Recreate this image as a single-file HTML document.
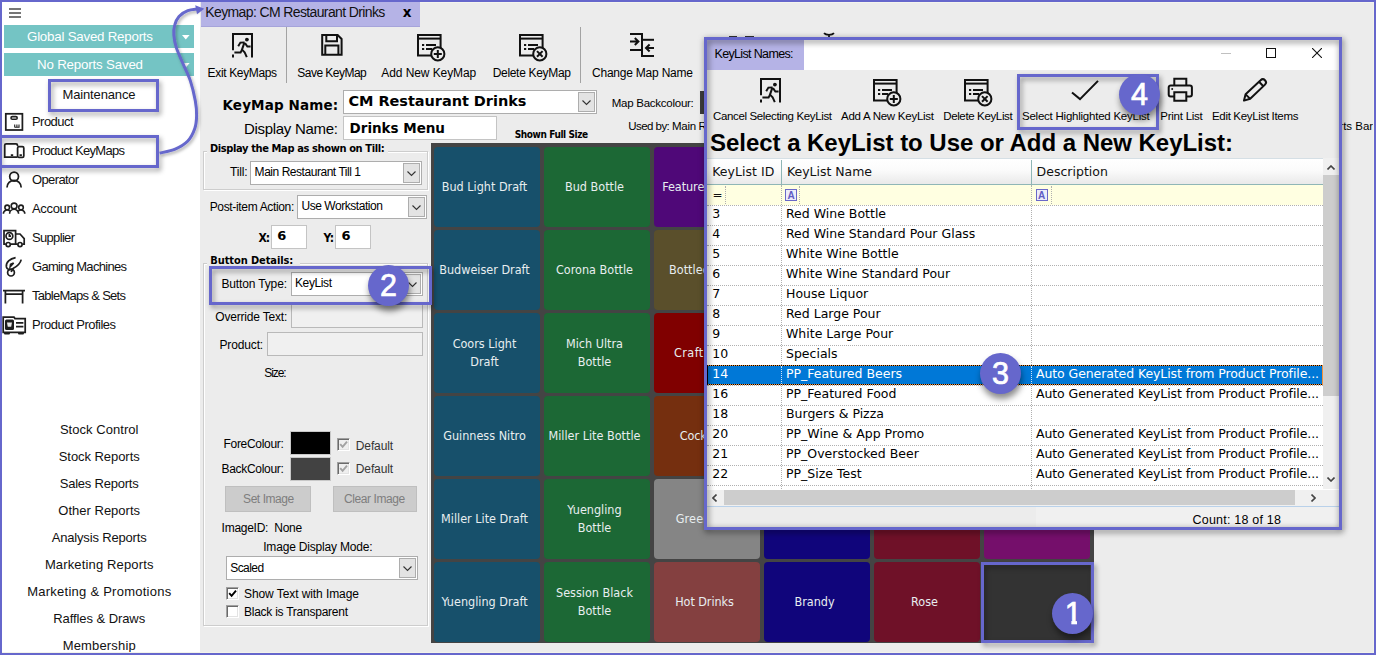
<!DOCTYPE html><html><head><meta charset="utf-8"><title>KeyMap</title><style>
html,body{margin:0;padding:0}html{overflow:hidden;width:1376px;height:655px}body{width:1376px;height:655px;position:relative;overflow:hidden;background:#ececec;font-family:"Liberation Sans",sans-serif}
.r{position:absolute;box-sizing:border-box}.t{position:absolute;white-space:pre;line-height:20px;height:20px}
#w{position:absolute;left:0;top:0;width:1376px;height:655px;overflow:hidden;background:#ececec}
</style></head><body><div id="w">
<div class="r" style="left:0px;top:0px;width:200px;height:655px;background:#fff;"></div>
<div class="r" style="left:9px;top:8px;width:12px;height:2px;background:#767676;"></div>
<div class="r" style="left:9px;top:12px;width:12px;height:2px;background:#767676;"></div>
<div class="r" style="left:9px;top:16px;width:12px;height:2px;background:#767676;"></div>
<div class="r" style="left:4px;top:25px;width:190px;height:23px;background:#74c4c4;"></div>
<div class="r" style="left:4px;top:53px;width:190px;height:23px;background:#74c4c4;"></div>
<svg class="r" style="left:182px;top:35px" width="8" height="5" viewBox="0 0 8 5"><path d="M0,0 L7.6,0 L3.8,4.5 Z" fill="#fff"/></svg>
<svg class="r" style="left:182px;top:63px" width="8" height="5" viewBox="0 0 8 5"><path d="M0,0 L7.6,0 L3.8,4.5 Z" fill="#fff"/></svg>
<div class="r" style="left:201px;top:2px;width:219px;height:25px;background:#b5b3e6;"></div>
<div class="r" style="left:201px;top:25.5px;width:219px;height:1.5px;background:#a6a4da;"></div>
<div class="r" style="left:286px;top:27px;width:1px;height:56px;background:#a3a3a3;"></div>
<div class="r" style="left:580px;top:27px;width:1px;height:56px;background:#a3a3a3;"></div>
<div class="r" style="left:343px;top:90px;width:254px;height:24px;background:#fff;border:1px solid #adadad;"></div>
<div class="r" style="left:578px;top:92px;width:17px;height:20px;background:#e3e3e3;border:1px solid #adadad;"></div>
<svg class="r" style="left:582.0px;top:99.5px" width="9" height="6" viewBox="0 0 9 6"><path d="M0.5,0.5 L4.5,4.5 L8.5,0.5" fill="none" stroke="#333" stroke-width="1.1"/></svg>
<div class="r" style="left:343px;top:116px;width:154px;height:24px;background:#fff;border:1px solid #c4c4c4;"></div>
<div class="r" style="left:700px;top:91px;width:40px;height:23px;background:#3c3c3c;"></div>
<div class="r" style="left:203px;top:151px;width:225px;height:39px;border:1px solid #cdcdcd;box-shadow:1px 1px 0 #fff, inset 1px 1px 0 #fff;"></div>
<div class="r" style="left:207px;top:145px;width:181px;height:12px;background:#ececec;"></div>
<div class="r" style="left:250px;top:161px;width:172px;height:24px;background:#fff;border:1px solid #adadad;"></div>
<div class="r" style="left:403px;top:163px;width:17px;height:20px;background:#e3e3e3;border:1px solid #adadad;"></div>
<svg class="r" style="left:407.0px;top:170.5px" width="9" height="6" viewBox="0 0 9 6"><path d="M0.5,0.5 L4.5,4.5 L8.5,0.5" fill="none" stroke="#333" stroke-width="1.1"/></svg>
<div class="r" style="left:297px;top:195px;width:130px;height:24px;background:#fff;border:1px solid #adadad;"></div>
<div class="r" style="left:408px;top:197px;width:17px;height:20px;background:#e3e3e3;border:1px solid #adadad;"></div>
<svg class="r" style="left:412.0px;top:204.5px" width="9" height="6" viewBox="0 0 9 6"><path d="M0.5,0.5 L4.5,4.5 L8.5,0.5" fill="none" stroke="#333" stroke-width="1.1"/></svg>
<div class="r" style="left:271px;top:225px;width:36px;height:24px;background:#fff;border:1px solid #c4c4c4;"></div>
<div class="r" style="left:335px;top:225px;width:36px;height:24px;background:#fff;border:1px solid #c4c4c4;"></div>
<div class="r" style="left:203px;top:263px;width:225px;height:363px;border:1px solid #cdcdcd;box-shadow:1px 1px 0 #fff, inset 1px 1px 0 #fff;"></div>
<div class="r" style="left:207px;top:256px;width:93px;height:12px;background:#ececec;"></div>
<div class="r" style="left:291px;top:272px;width:132px;height:24px;background:#fff;border:1px solid #adadad;"></div>
<div class="r" style="left:404px;top:274px;width:17px;height:20px;background:#e3e3e3;border:1px solid #adadad;"></div>
<svg class="r" style="left:408.0px;top:281.5px" width="9" height="6" viewBox="0 0 9 6"><path d="M0.5,0.5 L4.5,4.5 L8.5,0.5" fill="none" stroke="#333" stroke-width="1.1"/></svg>
<div class="r" style="left:291px;top:304px;width:132px;height:24px;background:#f0f0f0;border:1px solid #b9b9b9;"></div>
<div class="r" style="left:267px;top:332px;width:156px;height:24px;background:#f0f0f0;border:1px solid #b9b9b9;"></div>
<div class="r" style="left:290px;top:431px;width:41px;height:24px;background:#000;border:1px solid #c8c8c8;"></div>
<div class="r" style="left:290px;top:457px;width:41px;height:24px;background:#424242;border:1px solid #c8c8c8;"></div>
<div class="r" style="left:337px;top:438px;width:13px;height:13px;background:#efefef;border:1px solid;border-color:#a0a0a0 #fff #fff #a0a0a0;box-shadow:inset 1px 1px 0 #6a6a6a, inset -1px -1px 0 #e3e3e3;"></div>
<svg class="r" style="left:337px;top:438px" width="13" height="13" viewBox="0 0 13 13"><path d="M3.2,6.2 L5.6,8.8 L10,3.6" fill="none" stroke="#a2a2a2" stroke-width="1.9"/></svg>
<div class="r" style="left:337px;top:462px;width:13px;height:13px;background:#efefef;border:1px solid;border-color:#a0a0a0 #fff #fff #a0a0a0;box-shadow:inset 1px 1px 0 #6a6a6a, inset -1px -1px 0 #e3e3e3;"></div>
<svg class="r" style="left:337px;top:462px" width="13" height="13" viewBox="0 0 13 13"><path d="M3.2,6.2 L5.6,8.8 L10,3.6" fill="none" stroke="#a2a2a2" stroke-width="1.9"/></svg>
<div class="r" style="left:225px;top:486px;width:86px;height:26px;background:#cccccc;border:1px solid #bfbfbf;"></div>
<div class="r" style="left:333px;top:486px;width:84px;height:26px;background:#cccccc;border:1px solid #bfbfbf;"></div>
<div class="r" style="left:226px;top:556px;width:192px;height:24px;background:#fff;border:1px solid #adadad;"></div>
<div class="r" style="left:399px;top:558px;width:17px;height:20px;background:#e3e3e3;border:1px solid #adadad;"></div>
<svg class="r" style="left:403.0px;top:565.5px" width="9" height="6" viewBox="0 0 9 6"><path d="M0.5,0.5 L4.5,4.5 L8.5,0.5" fill="none" stroke="#333" stroke-width="1.1"/></svg>
<div class="r" style="left:226px;top:587px;width:13px;height:13px;background:#fff;border:1px solid;border-color:#a0a0a0 #fff #fff #a0a0a0;box-shadow:inset 1px 1px 0 #6a6a6a, inset -1px -1px 0 #e3e3e3;"></div>
<svg class="r" style="left:226px;top:587px" width="13" height="13" viewBox="0 0 13 13"><path d="M3.2,6.2 L5.6,8.8 L10,3.6" fill="none" stroke="#000" stroke-width="1.9"/></svg>
<div class="r" style="left:226px;top:605px;width:13px;height:13px;background:#fff;border:1px solid;border-color:#a0a0a0 #fff #fff #a0a0a0;box-shadow:inset 1px 1px 0 #6a6a6a, inset -1px -1px 0 #e3e3e3;"></div>
<div class="r" style="left:431px;top:143px;width:663px;height:500px;background:#444444;"></div>
<div class="r" style="left:433.7px;top:147.3px;width:106.3px;height:79.3px;background:#17506b;border-radius:4px;"></div>
<div class="r" style="left:433.7px;top:230.3px;width:106.3px;height:79.3px;background:#17506b;border-radius:4px;"></div>
<div class="r" style="left:433.7px;top:313.3px;width:106.3px;height:79.3px;background:#17506b;border-radius:4px;"></div>
<div class="r" style="left:433.7px;top:396.3px;width:106.3px;height:79.3px;background:#17506b;border-radius:4px;"></div>
<div class="r" style="left:433.7px;top:479.3px;width:106.3px;height:79.3px;background:#17506b;border-radius:4px;"></div>
<div class="r" style="left:433.7px;top:562.3px;width:106.3px;height:79.3px;background:#17506b;border-radius:4px;"></div>
<div class="r" style="left:543.7px;top:147.3px;width:106.3px;height:79.3px;background:#1c6835;border-radius:4px;"></div>
<div class="r" style="left:543.7px;top:230.3px;width:106.3px;height:79.3px;background:#1c6835;border-radius:4px;"></div>
<div class="r" style="left:543.7px;top:313.3px;width:106.3px;height:79.3px;background:#1c6835;border-radius:4px;"></div>
<div class="r" style="left:543.7px;top:396.3px;width:106.3px;height:79.3px;background:#1c6835;border-radius:4px;"></div>
<div class="r" style="left:543.7px;top:479.3px;width:106.3px;height:79.3px;background:#1c6835;border-radius:4px;"></div>
<div class="r" style="left:543.7px;top:562.3px;width:106.3px;height:79.3px;background:#1c6835;border-radius:4px;"></div>
<div class="r" style="left:653.7px;top:147.3px;width:106.3px;height:79.3px;background:#4f0878;border-radius:4px;"></div>
<div class="r" style="left:653.7px;top:230.3px;width:106.3px;height:79.3px;background:#5a4f2b;border-radius:4px;"></div>
<div class="r" style="left:653.7px;top:313.3px;width:106.3px;height:79.3px;background:#800000;border-radius:4px;"></div>
<div class="r" style="left:653.7px;top:396.3px;width:106.3px;height:79.3px;background:#752f0f;border-radius:4px;"></div>
<div class="r" style="left:653.7px;top:479.3px;width:106.3px;height:79.3px;background:#858585;border-radius:4px;"></div>
<div class="r" style="left:653.7px;top:562.3px;width:106.3px;height:79.3px;background:#844040;border-radius:4px;"></div>
<div class="r" style="left:763.7px;top:147.3px;width:106.3px;height:79.3px;background:#10057b;border-radius:4px;"></div>
<div class="r" style="left:763.7px;top:230.3px;width:106.3px;height:79.3px;background:#10057b;border-radius:4px;"></div>
<div class="r" style="left:763.7px;top:313.3px;width:106.3px;height:79.3px;background:#10057b;border-radius:4px;"></div>
<div class="r" style="left:763.7px;top:396.3px;width:106.3px;height:79.3px;background:#10057b;border-radius:4px;"></div>
<div class="r" style="left:763.7px;top:479.3px;width:106.3px;height:79.3px;background:#10057b;border-radius:4px;"></div>
<div class="r" style="left:763.7px;top:562.3px;width:106.3px;height:79.3px;background:#10057b;border-radius:4px;"></div>
<div class="r" style="left:873.7px;top:147.3px;width:106.3px;height:79.3px;background:#6f1128;border-radius:4px;"></div>
<div class="r" style="left:873.7px;top:230.3px;width:106.3px;height:79.3px;background:#6f1128;border-radius:4px;"></div>
<div class="r" style="left:873.7px;top:313.3px;width:106.3px;height:79.3px;background:#6f1128;border-radius:4px;"></div>
<div class="r" style="left:873.7px;top:396.3px;width:106.3px;height:79.3px;background:#6f1128;border-radius:4px;"></div>
<div class="r" style="left:873.7px;top:479.3px;width:106.3px;height:79.3px;background:#6f1128;border-radius:4px;"></div>
<div class="r" style="left:873.7px;top:562.3px;width:106.3px;height:79.3px;background:#6f1128;border-radius:4px;"></div>
<div class="r" style="left:983.7px;top:147.3px;width:106.3px;height:79.3px;background:#750f6b;border-radius:4px;"></div>
<div class="r" style="left:983.7px;top:230.3px;width:106.3px;height:79.3px;background:#750f6b;border-radius:4px;"></div>
<div class="r" style="left:983.7px;top:313.3px;width:106.3px;height:79.3px;background:#750f6b;border-radius:4px;"></div>
<div class="r" style="left:983.7px;top:396.3px;width:106.3px;height:79.3px;background:#750f6b;border-radius:4px;"></div>
<div class="r" style="left:983.7px;top:479.3px;width:106.3px;height:79.3px;background:#750f6b;border-radius:4px;"></div>
<div class="r" style="left:983.7px;top:562.3px;width:106.3px;height:79.3px;background:#333333;border-radius:4px;"></div>
<div class="r" style="left:729px;top:36px;width:8px;height:1px;background:#333;"></div>
<div class="r" style="left:745px;top:36px;width:9px;height:1px;background:#333;"></div>
<svg class="r" style="left:823px;top:32px" width="12" height="6" viewBox="0 0 12 6"><path d="M1,1.2 C3,3.4 9,3.4 11,1.2 M6,3 V6" fill="none" stroke="#111" stroke-width="1.8"/></svg>
<div class="r" style="left:420px;top:2px;width:954px;height:1px;background:#f4f4ee;"></div>
<svg class="r" style="left:0px;top:108px" width="30" height="28" viewBox="0 0 30 28"><rect x="5.8" y="5.8" width="16.6" height="16.2" fill="none" stroke="#1e1e1e" stroke-width="1.75"/><rect x="11" y="8.6" width="6.2" height="2.6" rx="1.3" fill="none" stroke="#1e1e1e" stroke-width="1.6"/><path d="M14.7,16.5 v2.4 M16.9,16.5 v2.4 M19,16.5 v2.4 M14.4,19.3 h5.2" stroke="#1e1e1e" stroke-width="1.1" fill="none"/></svg>
<svg class="r" style="left:0px;top:138px" width="30" height="26" viewBox="0 0 30 26"><path d="M17.5,8 V7.3 a1.5,1.5 0 0 0 -1.5,-1.5 H6.2 a1.5,1.5 0 0 0 -1.5,1.5 V19.2 H17.3" fill="none" stroke="#1e1e1e" stroke-width="1.75"/><rect x="17.6" y="8.6" width="6.2" height="10.7" rx="1.4" fill="none" stroke="#1e1e1e" stroke-width="1.75"/><path d="M10.8,17 h2.4 M19.5,17 h2.4" stroke="#1e1e1e" stroke-width="1.75"/></svg>
<svg class="r" style="left:0px;top:166px" width="30" height="26" viewBox="0 0 30 26"><circle cx="14.1" cy="10.6" r="4.4" fill="none" stroke="#1e1e1e" stroke-width="1.75"/><path d="M7,21.5 a7.1,7.1 0 0 1 14.2,0" fill="none" stroke="#1e1e1e" stroke-width="1.75"/></svg>
<svg class="r" style="left:0px;top:196px" width="30" height="24" viewBox="0 0 30 24"><g fill="none" stroke="#1e1e1e" stroke-width="1.6"><circle cx="14.1" cy="10" r="2.9"/><path d="M9.6,17.8 a4.5,4.5 0 0 1 9,0"/><circle cx="7.2" cy="11.4" r="2.3"/><path d="M3.4,17.8 a3.8,3.8 0 0 1 6.6,-2.6"/><circle cx="21" cy="11.4" r="2.3"/><path d="M24.8,17.8 a3.8,3.8 0 0 0 -6.6,-2.6"/></g></svg>
<svg class="r" style="left:0px;top:226px" width="30" height="24" viewBox="0 0 30 24"><g fill="none" stroke="#1e1e1e" stroke-width="1.7"><path d="M5.8,18.2 H4 V4.6 H15.6 V18.2 H10.6"/><path d="M15.6,8 H20 L24.2,12.6 V18.2 H22.4 M17.6,18.2 H15.6"/><circle cx="8.2" cy="18.6" r="2.1"/><circle cx="20" cy="18.6" r="2.1"/><circle cx="9.4" cy="10" r="3.4"/><path d="M9.4,8 V10.2 H11"/></g></svg>
<svg class="r" style="left:0px;top:254px" width="30" height="26" viewBox="0 0 30 26"><g fill="none" stroke="#1e1e1e" stroke-width="1.7"><circle cx="11" cy="18.6" r="3.4"/><path d="M15.6,3.6 C10,4.6 5.6,8.4 6.4,13 C7,16 10.5,16.4 13,14.6 C16.6,12.6 20.4,9.4 21.2,5.6"/><path d="M10.2,12.8 L13.6,9 L10.6,10.4 Z"/><path d="M13,14.6 C12.2,16 11.6,17 11.2,18"/></g></svg>
<svg class="r" style="left:0px;top:284px" width="30" height="24" viewBox="0 0 30 24"><path d="M3,6.6 H25 M5,10 H23 M5.4,6.6 V19.4 M22.6,6.6 V19.4" fill="none" stroke="#1e1e1e" stroke-width="1.75"/></svg>
<svg class="r" style="left:0px;top:312px" width="30" height="26" viewBox="0 0 30 26"><path d="M3.2,20.4 V5.2 H14 L15,6.6 H25.2 V20.4 Z" fill="none" stroke="#1e1e1e" stroke-width="1.75"/><rect x="5" y="7.4" width="9" height="10.6" rx="1.5" fill="#1e1e1e"/><path d="M7,10.6 h5 l-0.8,4.2 h-3.4 z" fill="#e8e8e8"/><path d="M16,10.8 H23.4 M16,14.6 H23.4" stroke="#1e1e1e" stroke-width="1.75"/><path d="M5,21.4 h4 M19,21.4 h4" stroke="#1e1e1e" stroke-width="2" stroke-linecap="round"/></svg>
<svg class="r" style="left:232.2px;top:32.9px" width="22" height="26" viewBox="0 0 22 26"><g fill="none" stroke="#111" stroke-width="2"><path d="M1,17.3 V1 H20 V24.4"/><path d="M1,21.6 V24.4" /></g><circle cx="14.9" cy="6.6" r="1.9" fill="#111"/><g fill="none" stroke="#111" stroke-width="2" stroke-linejoin="miter"><path d="M6.2,13.2 L8.4,9.6 L12.6,9.4"/><path d="M12.4,9.6 L10,16.6 L12.6,19.2 L14.8,24.2"/><path d="M10.2,16.4 L8.6,19.4 L2.4,19.4"/><path d="M13,10.2 L15.4,13.6 L18.6,13.6"/></g></svg>
<svg class="r" style="left:320px;top:33px" width="24" height="24" viewBox="0 0 24 24"><g fill="none" stroke="#111" stroke-width="2"><path d="M2.2,2.1 H17.6 L21.6,6 V21.7 H2.2 Z"/><path d="M6.3,2.1 V8.2 H17 V2.1"/><path d="M5.3,21.7 V12.4 H18.4 V21.7"/></g></svg>
<svg class="r" style="left:417.3px;top:34.2px" width="29" height="28" viewBox="0 0 29 28"><g fill="none" stroke="#111" stroke-width="2"><path d="M1,1 H23.6 V21.6 H1 Z"/><path d="M1,4.6 H23.6"/><path d="M5,11 H7.2 M9,11 H19 M5,14.9 H7.2 M9,14.9 H15"/></g><circle cx="20.8" cy="19.9" r="6.6" fill="#ececec" stroke="#111" stroke-width="2"/><path d="M16.8,19.9 H24.8 M20.8,15.9 V23.9" stroke="#111" stroke-width="2" fill="none"/></svg>
<svg class="r" style="left:519.3px;top:34.2px" width="29" height="28" viewBox="0 0 29 28"><g fill="none" stroke="#111" stroke-width="2"><path d="M1,1 H23.6 V21.6 H1 Z"/><path d="M1,4.6 H23.6"/><path d="M5,11 H7.2 M9,11 H19 M5,14.9 H7.2 M9,14.9 H15"/></g><circle cx="20.8" cy="19.9" r="6.6" fill="#ececec" stroke="#111" stroke-width="2"/><path d="M18,17.1 L23.6,22.7 M23.6,17.1 L18,22.7" stroke="#111" stroke-width="2" fill="none"/></svg>
<svg class="r" style="left:628px;top:30px" width="30" height="30" viewBox="0 0 30 30"><g fill="none" stroke="#111" stroke-width="2"><path d="M2,4 H14 V26 H26"/><path d="M2,20 H14"/><path d="M14,9.8 H26"/><path d="M2,11.5 H10 M6.8,8 L10.4,11.5 L6.8,15"/><path d="M26,18 H18.4 M21.6,14.5 L18,18 L21.6,21.5"/></g></svg>
<div class="t" style="top:26.799999999999997px;font:400 13.3px/20px 'Liberation Sans', sans-serif;color:#fff;letter-spacing:-0.215px;left:-210px;width:600px;text-align:center;text-indent:-0.215px;"><span id="m0">Global Saved Reports</span></div>
<div class="t" style="top:54.8px;font:400 13.3px/20px 'Liberation Sans', sans-serif;color:#fff;letter-spacing:-0.177px;left:-210px;width:600px;text-align:center;text-indent:-0.177px;"><span id="m1">No Reports Saved</span></div>
<div class="t" style="top:84.5px;font:400 13px/20px 'Liberation Sans', sans-serif;color:#111;letter-spacing:-0.145px;left:-201px;width:600px;text-align:center;text-indent:-0.145px;"><span id="m2">Maintenance</span></div>
<div class="t" id="m3" style="top:112px;font:400 13px/20px 'Liberation Sans', sans-serif;color:#111;letter-spacing:-0.552px;left:32px;">Product</div>
<div class="t" id="m4" style="top:141px;font:400 13px/20px 'Liberation Sans', sans-serif;color:#111;letter-spacing:-0.686px;left:32px;">Product KeyMaps</div>
<div class="t" id="m5" style="top:170px;font:400 13px/20px 'Liberation Sans', sans-serif;color:#111;letter-spacing:-0.616px;left:32px;">Operator</div>
<div class="t" id="m6" style="top:199px;font:400 13px/20px 'Liberation Sans', sans-serif;color:#111;letter-spacing:-0.331px;left:32px;">Account</div>
<div class="t" id="m7" style="top:228px;font:400 13px/20px 'Liberation Sans', sans-serif;color:#111;letter-spacing:-0.672px;left:32px;">Supplier</div>
<div class="t" id="m8" style="top:257px;font:400 13px/20px 'Liberation Sans', sans-serif;color:#111;letter-spacing:-0.699px;left:32px;">Gaming Machines</div>
<div class="t" id="m9" style="top:286px;font:400 13px/20px 'Liberation Sans', sans-serif;color:#111;letter-spacing:-0.719px;left:32px;">TableMaps &amp; Sets</div>
<div class="t" id="m10" style="top:315px;font:400 13px/20px 'Liberation Sans', sans-serif;color:#111;letter-spacing:-0.518px;left:32px;">Product Profiles</div>
<div class="t" style="top:419.8px;font:400 13px/20px 'Liberation Sans', sans-serif;color:#111;letter-spacing:0.046px;left:-200.8px;width:600px;text-align:center;text-indent:0.046px;"><span id="m11">Stock Control</span></div>
<div class="t" style="top:446.8px;font:400 13px/20px 'Liberation Sans', sans-serif;color:#111;letter-spacing:-0.055px;left:-200.8px;width:600px;text-align:center;text-indent:-0.055px;"><span id="m12">Stock Reports</span></div>
<div class="t" style="top:473.8px;font:400 13px/20px 'Liberation Sans', sans-serif;color:#111;letter-spacing:-0.221px;left:-200.8px;width:600px;text-align:center;text-indent:-0.221px;"><span id="m13">Sales Reports</span></div>
<div class="t" style="top:500.8px;font:400 13px/20px 'Liberation Sans', sans-serif;color:#111;letter-spacing:0.004px;left:-200.8px;width:600px;text-align:center;text-indent:0.004px;"><span id="m14">Other Reports</span></div>
<div class="t" style="top:527.8px;font:400 13px/20px 'Liberation Sans', sans-serif;color:#111;letter-spacing:-0.170px;left:-200.8px;width:600px;text-align:center;text-indent:-0.170px;"><span id="m15">Analysis Reports</span></div>
<div class="t" style="top:554.8px;font:400 13px/20px 'Liberation Sans', sans-serif;color:#111;letter-spacing:0.149px;left:-200.8px;width:600px;text-align:center;text-indent:0.149px;"><span id="m16">Marketing Reports</span></div>
<div class="t" style="top:581.8px;font:400 13px/20px 'Liberation Sans', sans-serif;color:#111;letter-spacing:0.251px;left:-200.8px;width:600px;text-align:center;text-indent:0.251px;"><span id="m17">Marketing &amp; Promotions</span></div>
<div class="t" style="top:608.8px;font:400 13px/20px 'Liberation Sans', sans-serif;color:#111;letter-spacing:-0.069px;left:-200.8px;width:600px;text-align:center;text-indent:-0.069px;"><span id="m18">Raffles &amp; Draws</span></div>
<div class="t" style="top:635.8px;font:400 13px/20px 'Liberation Sans', sans-serif;color:#111;letter-spacing:0.163px;left:-200.8px;width:600px;text-align:center;text-indent:0.163px;"><span id="m19">Membership</span></div>
<div class="t" id="m20" style="top:1.9000000000000004px;font:400 14px/20px 'Liberation Sans', sans-serif;color:#111;letter-spacing:-0.624px;left:205.3px;">Keymap: CM Restaurant Drinks</div>
<div class="t" id="m21" style="top:2px;font:700 13.5px/20px 'DejaVu Sans', sans-serif;color:#000;left:402.7px;">x</div>
<div class="t" id="m22" style="top:62.5px;font:400 12px/20px 'Liberation Sans', sans-serif;color:#000;letter-spacing:-0.351px;left:207.6px;">Exit KeyMaps</div>
<div class="t" id="m23" style="top:62.5px;font:400 12px/20px 'Liberation Sans', sans-serif;color:#000;letter-spacing:-0.522px;left:297.3px;">Save KeyMap</div>
<div class="t" id="m24" style="top:62.5px;font:400 12px/20px 'Liberation Sans', sans-serif;color:#000;letter-spacing:-0.081px;left:381.3px;">Add New KeyMap</div>
<div class="t" id="m25" style="top:62.5px;font:400 12px/20px 'Liberation Sans', sans-serif;color:#000;letter-spacing:-0.312px;left:492.7px;">Delete KeyMap</div>
<div class="t" id="m26" style="top:62.5px;font:400 12px/20px 'Liberation Sans', sans-serif;color:#000;letter-spacing:-0.219px;left:592px;">Change Map Name</div>
<div class="t" id="m27" style="top:94.7px;font:700 13.5px/20px 'DejaVu Sans', sans-serif;color:#000;letter-spacing:0.134px;left:222.5px;">KeyMap Name:</div>
<div class="t" id="m28" style="top:91.3px;font:700 14.5px/20px 'DejaVu Sans', sans-serif;color:#000;letter-spacing:-0.041px;left:348.4px;">CM Restaurant Drinks</div>
<div class="t" id="m29" style="top:119px;font:400 15px/20px 'Liberation Sans', sans-serif;color:#000;letter-spacing:-0.294px;left:243.9px;">Display Name:</div>
<div class="t" id="m30" style="top:118.30000000000001px;font:700 13.5px/20px 'DejaVu Sans', sans-serif;color:#000;letter-spacing:-0.024px;left:349.6px;">Drinks Menu</div>
<div class="t" id="m31" style="top:124.69999999999999px;font:700 10px/20px 'DejaVu Sans Condensed', 'DejaVu Sans', sans-serif;color:#000;letter-spacing:-0.419px;left:514.8px;">Shown Full Size</div>
<div class="t" id="m32" style="top:93px;font:400 11.5px/20px 'Liberation Sans', sans-serif;color:#000;letter-spacing:-0.261px;left:611.8px;">Map Backcolour:</div>
<div class="t" id="m33" style="top:116px;font:400 11.5px/20px 'Liberation Sans', sans-serif;color:#000;letter-spacing:-0.556px;left:628.3px;">Used by:</div>
<div class="t" id="m34" style="top:116px;font:400 11.5px/20px 'Liberation Sans', sans-serif;color:#000;left:672px;letter-spacing:-0.3px;">Main Restaurant Till 1</div>
<div class="t" style="top:116.3px;font:400 11.5px/20px 'Liberation Sans', sans-serif;color:#000;left:773.2px;width:600px;text-align:right;"><span id="m35">Sports Bar</span></div>
<div class="t" id="m36" style="top:139.4px;font:700 11px/20px 'DejaVu Sans Condensed', 'DejaVu Sans', sans-serif;color:#000;letter-spacing:-0.377px;left:210px;">Display the Map as shown on Till:</div>
<div class="t" id="m37" style="top:161.8px;font:400 12px/20px 'Liberation Sans', sans-serif;color:#000;letter-spacing:-0.180px;left:230px;">Till:</div>
<div class="t" id="m38" style="top:161.8px;font:400 12px/20px 'Liberation Sans', sans-serif;color:#000;letter-spacing:-0.460px;left:254.6px;">Main Restaurant Till 1</div>
<div class="t" id="m39" style="top:197.2px;font:400 12px/20px 'Liberation Sans', sans-serif;color:#000;letter-spacing:-0.340px;left:209.7px;">Post-item Action:</div>
<div class="t" id="m40" style="top:196px;font:400 12px/20px 'Liberation Sans', sans-serif;color:#000;letter-spacing:-0.458px;left:301.5px;">Use Workstation</div>
<div class="t" id="m41" style="top:227.5px;font:700 12px/20px 'DejaVu Sans Condensed', 'DejaVu Sans', sans-serif;color:#000;letter-spacing:-0.856px;left:258.4px;">X:</div>
<div class="t" id="m42" style="top:226.1px;font:700 13px/20px 'DejaVu Sans', sans-serif;color:#000;left:277.3px;">6</div>
<div class="t" id="m43" style="top:227.5px;font:700 12px/20px 'DejaVu Sans Condensed', 'DejaVu Sans', sans-serif;color:#000;letter-spacing:-0.494px;left:323.6px;">Y:</div>
<div class="t" id="m44" style="top:226.1px;font:700 13px/20px 'DejaVu Sans', sans-serif;color:#000;left:341.5px;">6</div>
<div class="t" id="m45" style="top:251.2px;font:700 11px/20px 'DejaVu Sans Condensed', 'DejaVu Sans', sans-serif;color:#000;letter-spacing:-0.094px;left:210.3px;">Button Details:</div>
<div class="t" id="m46" style="top:274.2px;font:400 12px/20px 'Liberation Sans', sans-serif;color:#000;letter-spacing:-0.152px;left:221.5px;">Button Type:</div>
<div class="t" id="m47" style="top:273.3px;font:400 12px/20px 'Liberation Sans', sans-serif;color:#000;letter-spacing:-0.393px;left:295px;">KeyList</div>
<div class="t" id="m48" style="top:306.8px;font:400 12px/20px 'Liberation Sans', sans-serif;color:#000;letter-spacing:-0.191px;left:215.3px;">Override Text:</div>
<div class="t" id="m49" style="top:334.7px;font:400 12px/20px 'Liberation Sans', sans-serif;color:#000;letter-spacing:-0.143px;left:219.5px;">Product:</div>
<div class="t" id="m50" style="top:362.6px;font:400 12px/20px 'Liberation Sans', sans-serif;color:#000;letter-spacing:-1.047px;left:264.2px;">Size:</div>
<div class="t" id="m51" style="top:433.9px;font:400 12px/20px 'Liberation Sans', sans-serif;color:#000;letter-spacing:-0.296px;left:223.5px;">ForeColour:</div>
<div class="t" id="m52" style="top:459.3px;font:400 12px/20px 'Liberation Sans', sans-serif;color:#000;letter-spacing:-0.298px;left:221.5px;">BackColour:</div>
<div class="t" id="m53" style="top:435.8px;font:400 12px/20px 'Liberation Sans', sans-serif;color:#333;letter-spacing:-0.122px;left:355.8px;">Default</div>
<div class="t" id="m54" style="top:458.8px;font:400 12px/20px 'Liberation Sans', sans-serif;color:#333;letter-spacing:-0.122px;left:355.8px;">Default</div>
<div class="t" id="m55" style="top:488.5px;font:400 12px/20px 'Liberation Sans', sans-serif;color:#7e7e7e;letter-spacing:-0.450px;left:243.1px;">Set Image</div>
<div class="t" id="m56" style="top:488.5px;font:400 12px/20px 'Liberation Sans', sans-serif;color:#7e7e7e;letter-spacing:-0.398px;left:343.9px;">Clear Image</div>
<div class="t" id="m57" style="top:517.7px;font:400 12px/20px 'Liberation Sans', sans-serif;color:#000;letter-spacing:-0.265px;left:221.6px;">ImageID:  None</div>
<div class="t" id="m58" style="top:536.5px;font:400 12px/20px 'Liberation Sans', sans-serif;color:#000;letter-spacing:-0.184px;left:263.2px;">Image Display Mode:</div>
<div class="t" id="m59" style="top:557.6px;font:400 12px/20px 'Liberation Sans', sans-serif;color:#000;letter-spacing:-0.541px;left:230.2px;">Scaled</div>
<div class="t" id="m60" style="top:583.6px;font:400 12px/20px 'Liberation Sans', sans-serif;color:#000;letter-spacing:-0.080px;left:244px;">Show Text with Image</div>
<div class="t" id="m61" style="top:601.6px;font:400 12px/20px 'Liberation Sans', sans-serif;color:#000;letter-spacing:-0.248px;left:244px;">Black is Transparent</div>
<div class="t" style="top:176.8px;font:400 12.5px/20px 'DejaVu Sans Condensed', 'DejaVu Sans', sans-serif;color:#e8eef0;left:184.5px;width:600px;text-align:center;"><span id="m62">Bud Light Draft</span></div>
<div class="t" style="top:259.8px;font:400 12.5px/20px 'DejaVu Sans Condensed', 'DejaVu Sans', sans-serif;color:#e8eef0;left:184.5px;width:600px;text-align:center;"><span id="m63">Budweiser Draft</span></div>
<div class="t" style="top:334.0px;font:400 12.5px/20px 'DejaVu Sans Condensed', 'DejaVu Sans', sans-serif;color:#e8eef0;left:184.5px;width:600px;text-align:center;"><span id="m64">Coors Light</span></div>
<div class="t" style="top:351.6px;font:400 12.5px/20px 'DejaVu Sans Condensed', 'DejaVu Sans', sans-serif;color:#e8eef0;left:184.5px;width:600px;text-align:center;"><span id="m65">Draft</span></div>
<div class="t" style="top:425.8px;font:400 12.5px/20px 'DejaVu Sans Condensed', 'DejaVu Sans', sans-serif;color:#e8eef0;left:184.5px;width:600px;text-align:center;"><span id="m66">Guinness Nitro</span></div>
<div class="t" style="top:508.79999999999995px;font:400 12.5px/20px 'DejaVu Sans Condensed', 'DejaVu Sans', sans-serif;color:#e8eef0;left:184.5px;width:600px;text-align:center;"><span id="m67">Miller Lite Draft</span></div>
<div class="t" style="top:591.8px;font:400 12.5px/20px 'DejaVu Sans Condensed', 'DejaVu Sans', sans-serif;color:#e8eef0;left:184.5px;width:600px;text-align:center;"><span id="m68">Yuengling Draft</span></div>
<div class="t" style="top:176.8px;font:400 12.5px/20px 'DejaVu Sans Condensed', 'DejaVu Sans', sans-serif;color:#e8eef0;left:294.5px;width:600px;text-align:center;"><span id="m69">Bud Bottle</span></div>
<div class="t" style="top:259.8px;font:400 12.5px/20px 'DejaVu Sans Condensed', 'DejaVu Sans', sans-serif;color:#e8eef0;left:294.5px;width:600px;text-align:center;"><span id="m70">Corona Bottle</span></div>
<div class="t" style="top:334.0px;font:400 12.5px/20px 'DejaVu Sans Condensed', 'DejaVu Sans', sans-serif;color:#e8eef0;left:294.5px;width:600px;text-align:center;"><span id="m71">Mich Ultra</span></div>
<div class="t" style="top:351.6px;font:400 12.5px/20px 'DejaVu Sans Condensed', 'DejaVu Sans', sans-serif;color:#e8eef0;left:294.5px;width:600px;text-align:center;"><span id="m72">Bottle</span></div>
<div class="t" style="top:425.8px;font:400 12.5px/20px 'DejaVu Sans Condensed', 'DejaVu Sans', sans-serif;color:#e8eef0;left:294.5px;width:600px;text-align:center;"><span id="m73">Miller Lite Bottle</span></div>
<div class="t" style="top:499.99999999999994px;font:400 12.5px/20px 'DejaVu Sans Condensed', 'DejaVu Sans', sans-serif;color:#e8eef0;left:294.5px;width:600px;text-align:center;"><span id="m74">Yuengling</span></div>
<div class="t" style="top:517.5999999999999px;font:400 12.5px/20px 'DejaVu Sans Condensed', 'DejaVu Sans', sans-serif;color:#e8eef0;left:294.5px;width:600px;text-align:center;"><span id="m75">Bottle</span></div>
<div class="t" style="top:583.0px;font:400 12.5px/20px 'DejaVu Sans Condensed', 'DejaVu Sans', sans-serif;color:#e8eef0;left:294.5px;width:600px;text-align:center;"><span id="m76">Session Black</span></div>
<div class="t" style="top:600.5999999999999px;font:400 12.5px/20px 'DejaVu Sans Condensed', 'DejaVu Sans', sans-serif;color:#e8eef0;left:294.5px;width:600px;text-align:center;"><span id="m77">Bottle</span></div>
<div class="t" style="top:176.8px;font:400 12.5px/20px 'DejaVu Sans Condensed', 'DejaVu Sans', sans-serif;color:#e8eef0;letter-spacing:-0.043px;left:404.5px;width:600px;text-align:center;text-indent:-0.043px;"><span id="m78">Featured Beers</span></div>
<div class="t" style="top:259.8px;font:400 12.5px/20px 'DejaVu Sans Condensed', 'DejaVu Sans', sans-serif;color:#e8eef0;letter-spacing:0.078px;left:404.5px;width:600px;text-align:center;text-indent:0.078px;"><span id="m79">Bottled Beer</span></div>
<div class="t" style="top:342.8px;font:400 12.5px/20px 'DejaVu Sans Condensed', 'DejaVu Sans', sans-serif;color:#e8eef0;letter-spacing:0.393px;left:404.5px;width:600px;text-align:center;text-indent:0.393px;"><span id="m80">Craft Beer</span></div>
<div class="t" style="top:425.8px;font:400 12.5px/20px 'DejaVu Sans Condensed', 'DejaVu Sans', sans-serif;color:#e8eef0;letter-spacing:-0.155px;left:404.5px;width:600px;text-align:center;text-indent:-0.155px;"><span id="m81">Cocktails</span></div>
<div class="t" style="top:508.79999999999995px;font:400 12.5px/20px 'DejaVu Sans Condensed', 'DejaVu Sans', sans-serif;color:#e8eef0;letter-spacing:0.179px;left:404.5px;width:600px;text-align:center;text-indent:0.179px;"><span id="m82">Green Tea</span></div>
<div class="t" style="top:591.8px;font:400 12.5px/20px 'DejaVu Sans Condensed', 'DejaVu Sans', sans-serif;color:#e8eef0;letter-spacing:-0.059px;left:404.5px;width:600px;text-align:center;text-indent:-0.059px;"><span id="m83">Hot Drinks</span></div>
<div class="t" style="top:591.8px;font:400 12.5px/20px 'DejaVu Sans Condensed', 'DejaVu Sans', sans-serif;color:#e8eef0;left:514.5px;width:600px;text-align:center;"><span id="m84">Brandy</span></div>
<div class="t" style="top:591.8px;font:400 12.5px/20px 'DejaVu Sans Condensed', 'DejaVu Sans', sans-serif;color:#e8eef0;left:624.5px;width:600px;text-align:center;"><span id="m85">Rose</span></div>
<div class="r" style="left:707px;top:40px;width:632px;height:487px;background:#ececec;"></div>
<div class="r" style="left:707px;top:40px;width:632px;height:30px;background:#fff;"></div>
<div class="r" style="left:707px;top:40px;width:97px;height:30px;background:#b5b3e6;"></div>
<div class="r" style="left:1221px;top:53px;width:10px;height:1px;background:#c0c0c0;"></div>
<div class="r" style="left:1266px;top:48px;width:10px;height:10px;border:1px solid #111;"></div>
<svg class="r" style="left:1312px;top:48px" width="10" height="10" viewBox="0 0 10 10"><path d="M0,0 L10,10 M10,0 L0,10" stroke="#111" stroke-width="1.1" fill="none"/></svg>
<div class="r" style="left:707px;top:158px;width:632px;height:349px;background:#fff;"></div>
<div class="r" style="left:707px;top:158px;width:616px;height:27px;background:linear-gradient(#ffffff 0%,#fbfbfb 45%,#e9e9e9 100%);border-top:1px solid #d5dfe5;border-bottom:1px solid #8fb6b6;"></div>
<div class="r" style="left:781px;top:160px;width:1px;height:24px;background:#8fb6b6;"></div>
<div class="r" style="left:1031px;top:160px;width:1px;height:24px;background:#8fb6b6;"></div>
<div class="r" style="left:707px;top:185px;width:616px;height:20px;background:#ffffe1;"></div>
<div class="r" style="left:785px;top:189px;width:12px;height:12px;background:#ececfa;border:1px solid #6a68c8;"></div>
<div class="r" style="left:1035.5px;top:189px;width:12px;height:12px;background:#ececfa;border:1px solid #6a68c8;"></div>
<div class="r" style="left:707px;top:205px;width:616px;height:1px;border-top:1px dotted #b0b0b0;"></div>
<div class="r" style="left:707px;top:225px;width:616px;height:1px;border-top:1px dotted #b0b0b0;"></div>
<div class="r" style="left:707px;top:245px;width:616px;height:1px;border-top:1px dotted #b0b0b0;"></div>
<div class="r" style="left:707px;top:265px;width:616px;height:1px;border-top:1px dotted #b0b0b0;"></div>
<div class="r" style="left:707px;top:285px;width:616px;height:1px;border-top:1px dotted #b0b0b0;"></div>
<div class="r" style="left:707px;top:305px;width:616px;height:1px;border-top:1px dotted #b0b0b0;"></div>
<div class="r" style="left:707px;top:325px;width:616px;height:1px;border-top:1px dotted #b0b0b0;"></div>
<div class="r" style="left:707px;top:345px;width:616px;height:1px;border-top:1px dotted #b0b0b0;"></div>
<div class="r" style="left:707px;top:365px;width:616px;height:1px;border-top:1px dotted #b0b0b0;"></div>
<div class="r" style="left:707px;top:385px;width:616px;height:1px;border-top:1px dotted #b0b0b0;"></div>
<div class="r" style="left:707px;top:405px;width:616px;height:1px;border-top:1px dotted #b0b0b0;"></div>
<div class="r" style="left:707px;top:425px;width:616px;height:1px;border-top:1px dotted #b0b0b0;"></div>
<div class="r" style="left:707px;top:445px;width:616px;height:1px;border-top:1px dotted #b0b0b0;"></div>
<div class="r" style="left:707px;top:465px;width:616px;height:1px;border-top:1px dotted #b0b0b0;"></div>
<div class="r" style="left:707px;top:485px;width:616px;height:1px;border-top:1px dotted #b0b0b0;"></div>
<div class="r" style="left:781px;top:185px;width:1px;height:304px;border-left:1px dotted #b0b0b0;"></div>
<div class="r" style="left:1031px;top:185px;width:1px;height:304px;border-left:1px dotted #b0b0b0;"></div>
<div class="r" style="left:725px;top:186px;width:1px;height:18px;border-left:1px dotted #b0b0b0;"></div>
<div class="r" style="left:798.5px;top:186px;width:1px;height:18px;border-left:1px dotted #b0b0b0;"></div>
<div class="r" style="left:1050.5px;top:186px;width:1px;height:18px;border-left:1px dotted #b0b0b0;"></div>
<div class="r" style="left:707px;top:365px;width:616px;height:20px;background:repeating-linear-gradient(90deg,#000 0 1px,#f5923a 1px 2px);"></div>
<div class="r" style="left:708px;top:366px;width:614px;height:18px;background:#0078d7;"></div>
<div class="r" style="left:781px;top:366px;width:1px;height:18px;border-left:1px dotted #cfe3f6;"></div>
<div class="r" style="left:1031px;top:366px;width:1px;height:18px;border-left:1px dotted #cfe3f6;"></div>
<div class="r" style="left:1323px;top:158px;width:16px;height:331px;background:#f0f0f0;"></div>
<div class="r" style="left:1323px;top:175px;width:16px;height:221px;background:#cdcdcd;"></div>
<svg class="r" style="left:1327px;top:165px" width="8" height="5" viewBox="0 0 8 5"><path d="M0.5,4.5 L4,1 L7.5,4.5" fill="none" stroke="#444" stroke-width="1.6"/></svg>
<svg class="r" style="left:1327px;top:477px" width="8" height="5" viewBox="0 0 8 5"><path d="M0.5,0.5 L4,4 L7.5,0.5" fill="none" stroke="#444" stroke-width="1.6"/></svg>
<div class="r" style="left:707px;top:490px;width:632px;height:16px;background:#f0f0f0;"></div>
<div class="r" style="left:724px;top:490px;width:571px;height:15px;background:#cdcdcd;"></div>
<svg class="r" style="left:712px;top:493.5px" width="5" height="8" viewBox="0 0 5 8"><path d="M4.5,0.5 L1,4 L4.5,7.5" fill="none" stroke="#444" stroke-width="1.6"/></svg>
<svg class="r" style="left:1311px;top:493.5px" width="5" height="8" viewBox="0 0 5 8"><path d="M0.5,0.5 L4,4 L0.5,7.5" fill="none" stroke="#444" stroke-width="1.6"/></svg>
<div class="r" style="left:707px;top:506px;width:632px;height:1px;background:#b9d1ea;"></div>
<div class="r" style="left:707px;top:507px;width:632px;height:20px;background:#f0f0f0;"></div>
<div class="r" style="left:707px;top:507px;width:329px;height:20px;background:#ececec;"></div>
<svg class="r" style="left:760px;top:77.9px" width="22" height="26" viewBox="0 0 22 26"><g fill="none" stroke="#111" stroke-width="2"><path d="M1,17.3 V1 H20 V24.4"/><path d="M1,21.6 V24.4" /></g><circle cx="14.9" cy="6.6" r="1.9" fill="#111"/><g fill="none" stroke="#111" stroke-width="2" stroke-linejoin="miter"><path d="M6.2,13.2 L8.4,9.6 L12.6,9.4"/><path d="M12.4,9.6 L10,16.6 L12.6,19.2 L14.8,24.2"/><path d="M10.2,16.4 L8.6,19.4 L2.4,19.4"/><path d="M13,10.2 L15.4,13.6 L18.6,13.6"/></g></svg>
<svg class="r" style="left:873.2px;top:78.9px" width="29" height="28" viewBox="0 0 29 28"><g fill="none" stroke="#111" stroke-width="2"><path d="M1,1 H23.6 V21.6 H1 Z"/><path d="M1,4.6 H23.6"/><path d="M5,11 H7.2 M9,11 H19 M5,14.9 H7.2 M9,14.9 H15"/></g><circle cx="20.8" cy="19.9" r="6.6" fill="#ececec" stroke="#111" stroke-width="2"/><path d="M16.8,19.9 H24.8 M20.8,15.9 V23.9" stroke="#111" stroke-width="2" fill="none"/></svg>
<svg class="r" style="left:964.1px;top:78.9px" width="29" height="28" viewBox="0 0 29 28"><g fill="none" stroke="#111" stroke-width="2"><path d="M1,1 H23.6 V21.6 H1 Z"/><path d="M1,4.6 H23.6"/><path d="M5,11 H7.2 M9,11 H19 M5,14.9 H7.2 M9,14.9 H15"/></g><circle cx="20.8" cy="19.9" r="6.6" fill="#ececec" stroke="#111" stroke-width="2"/><path d="M18,17.1 L23.6,22.7 M23.6,17.1 L18,22.7" stroke="#111" stroke-width="2" fill="none"/></svg>
<svg class="r" style="left:1068px;top:76px" width="34" height="28" viewBox="0 0 34 28"><path d="M4,16.4 L12,23.1 L30,4.9" fill="none" stroke="#111" stroke-width="2"/></svg>
<svg class="r" style="left:1166px;top:76px" width="30" height="28" viewBox="0 0 30 28"><g fill="none" stroke="#111" stroke-width="2"><path d="M8.3,9.4 V2.8 H20.3 V9.4"/><path d="M8.3,20.6 H4.7 a2,2 0 0 1 -2,-2 V11.4 a2,2 0 0 1 2,-2 H23.9 a2,2 0 0 1 2,2 V18.6 a2,2 0 0 1 -2,2 H20.3"/><path d="M8.3,16.2 H20.3 V24.7 H8.3 Z"/></g><circle cx="6.2" cy="12.9" r="1" fill="#111"/></svg>
<svg class="r" style="left:1240px;top:76px" width="30" height="28" viewBox="0 0 30 28"><g fill="none" stroke="#111" stroke-width="2" stroke-linejoin="round"><path d="M4,24.6 L5.6,18.2 L20.6,4.2 a3,3 0 0 1 4.4,4.4 L10.2,22.8 Z"/><path d="M5.6,18.4 L10,22.6"/><path d="M19,5.8 L23.4,10.2"/></g></svg>
<div class="t" id="m86" style="top:43.5px;font:400 12.5px/20px 'Liberation Sans', sans-serif;color:#000;letter-spacing:-0.656px;left:714.5px;">KeyList Names:</div>
<div class="t" id="m87" style="top:106.3px;font:400 11.5px/20px 'Liberation Sans', sans-serif;color:#000;letter-spacing:-0.357px;left:713px;">Cancel Selecting KeyList</div>
<div class="t" id="m88" style="top:106.3px;font:400 11.5px/20px 'Liberation Sans', sans-serif;color:#000;letter-spacing:-0.261px;left:841px;">Add A New KeyList</div>
<div class="t" id="m89" style="top:106.3px;font:400 11.5px/20px 'Liberation Sans', sans-serif;color:#000;letter-spacing:-0.358px;left:943.2px;">Delete KeyList</div>
<div class="t" id="m90" style="top:106.3px;font:400 11.5px/20px 'Liberation Sans', sans-serif;color:#000;letter-spacing:-0.236px;left:1022px;">Select Highlighted KeyList</div>
<div class="t" id="m91" style="top:106.3px;font:400 11.5px/20px 'Liberation Sans', sans-serif;color:#000;letter-spacing:-0.250px;left:1160.3px;">Print List</div>
<div class="t" id="m92" style="top:106.3px;font:400 11.5px/20px 'Liberation Sans', sans-serif;color:#000;letter-spacing:-0.332px;left:1212px;">Edit KeyList Items</div>
<div class="t" id="m93" style="top:133px;font:700 24px/20px 'Liberation Sans', sans-serif;color:#000;letter-spacing:-0.036px;left:710px;">Select a KeyList to Use or Add a New KeyList:</div>
<div class="t" id="m94" style="top:162.3px;font:400 12.5px/20px 'DejaVu Sans', sans-serif;color:#111;letter-spacing:0.054px;left:712.2px;">KeyList ID</div>
<div class="t" id="m95" style="top:162.3px;font:400 12.5px/20px 'DejaVu Sans', sans-serif;color:#111;letter-spacing:-0.034px;left:787px;">KeyList Name</div>
<div class="t" id="m96" style="top:162.3px;font:400 12.5px/20px 'DejaVu Sans', sans-serif;color:#111;letter-spacing:0.010px;left:1036.6px;">Description</div>
<div class="t" id="m97" style="top:184.8px;font:400 12px/20px 'DejaVu Sans', sans-serif;color:#111;left:712.5px;">=</div>
<div class="t" style="top:185.5px;font:700 10px/20px 'Liberation Sans', sans-serif;color:#5f5cc4;left:491px;width:600px;text-align:center;"><span id="m98">A</span></div>
<div class="t" style="top:185.5px;font:700 10px/20px 'Liberation Sans', sans-serif;color:#5f5cc4;left:741.5px;width:600px;text-align:center;"><span id="m99">A</span></div>
<div class="t" id="m100" style="top:203.7px;font:400 12.5px/20px 'DejaVu Sans', sans-serif;color:#000;left:712.3px;">3</div>
<div class="t" id="m101" style="top:203.7px;font:400 12.5px/20px 'DejaVu Sans', sans-serif;color:#000;left:786px;">Red Wine Bottle</div>
<div class="t" id="m102" style="top:223.7px;font:400 12.5px/20px 'DejaVu Sans', sans-serif;color:#000;left:712.3px;">4</div>
<div class="t" id="m103" style="top:223.7px;font:400 12.5px/20px 'DejaVu Sans', sans-serif;color:#000;left:786px;">Red Wine Standard Pour Glass</div>
<div class="t" id="m104" style="top:243.7px;font:400 12.5px/20px 'DejaVu Sans', sans-serif;color:#000;left:712.3px;">5</div>
<div class="t" id="m105" style="top:243.7px;font:400 12.5px/20px 'DejaVu Sans', sans-serif;color:#000;left:786px;">White Wine Bottle</div>
<div class="t" id="m106" style="top:263.7px;font:400 12.5px/20px 'DejaVu Sans', sans-serif;color:#000;left:712.3px;">6</div>
<div class="t" id="m107" style="top:263.7px;font:400 12.5px/20px 'DejaVu Sans', sans-serif;color:#000;left:786px;">White Wine Standard Pour</div>
<div class="t" id="m108" style="top:283.7px;font:400 12.5px/20px 'DejaVu Sans', sans-serif;color:#000;left:712.3px;">7</div>
<div class="t" id="m109" style="top:283.7px;font:400 12.5px/20px 'DejaVu Sans', sans-serif;color:#000;left:786px;">House Liquor</div>
<div class="t" id="m110" style="top:303.7px;font:400 12.5px/20px 'DejaVu Sans', sans-serif;color:#000;left:712.3px;">8</div>
<div class="t" id="m111" style="top:303.7px;font:400 12.5px/20px 'DejaVu Sans', sans-serif;color:#000;left:786px;">Red Large Pour</div>
<div class="t" id="m112" style="top:323.7px;font:400 12.5px/20px 'DejaVu Sans', sans-serif;color:#000;left:712.3px;">9</div>
<div class="t" id="m113" style="top:323.7px;font:400 12.5px/20px 'DejaVu Sans', sans-serif;color:#000;left:786px;">White Large Pour</div>
<div class="t" id="m114" style="top:343.7px;font:400 12.5px/20px 'DejaVu Sans', sans-serif;color:#000;left:712.3px;">10</div>
<div class="t" id="m115" style="top:343.7px;font:400 12.5px/20px 'DejaVu Sans', sans-serif;color:#000;left:786px;">Specials</div>
<div class="t" id="m116" style="top:363.7px;font:400 12.5px/20px 'DejaVu Sans', sans-serif;color:#fff;left:712.3px;">14</div>
<div class="t" id="m117" style="top:363.7px;font:400 12.5px/20px 'DejaVu Sans', sans-serif;color:#fff;left:786px;">PP_Featured Beers</div>
<div class="t" id="m118" style="top:363.7px;font:400 12.5px/20px 'DejaVu Sans', sans-serif;color:#fff;letter-spacing:-0.090px;left:1036px;">Auto Generated KeyList from Product Profile...</div>
<div class="t" id="m119" style="top:383.7px;font:400 12.5px/20px 'DejaVu Sans', sans-serif;color:#000;left:712.3px;">16</div>
<div class="t" id="m120" style="top:383.7px;font:400 12.5px/20px 'DejaVu Sans', sans-serif;color:#000;left:786px;">PP_Featured Food</div>
<div class="t" id="m121" style="top:383.7px;font:400 12.5px/20px 'DejaVu Sans', sans-serif;color:#000;letter-spacing:-0.090px;left:1036px;">Auto Generated KeyList from Product Profile...</div>
<div class="t" id="m122" style="top:403.7px;font:400 12.5px/20px 'DejaVu Sans', sans-serif;color:#000;left:712.3px;">18</div>
<div class="t" id="m123" style="top:403.7px;font:400 12.5px/20px 'DejaVu Sans', sans-serif;color:#000;left:786px;">Burgers &amp; Pizza</div>
<div class="t" id="m124" style="top:423.7px;font:400 12.5px/20px 'DejaVu Sans', sans-serif;color:#000;left:712.3px;">20</div>
<div class="t" id="m125" style="top:423.7px;font:400 12.5px/20px 'DejaVu Sans', sans-serif;color:#000;left:786px;">PP_Wine &amp; App Promo</div>
<div class="t" id="m126" style="top:423.7px;font:400 12.5px/20px 'DejaVu Sans', sans-serif;color:#000;letter-spacing:-0.090px;left:1036px;">Auto Generated KeyList from Product Profile...</div>
<div class="t" id="m127" style="top:443.7px;font:400 12.5px/20px 'DejaVu Sans', sans-serif;color:#000;left:712.3px;">21</div>
<div class="t" id="m128" style="top:443.7px;font:400 12.5px/20px 'DejaVu Sans', sans-serif;color:#000;left:786px;">PP_Overstocked Beer</div>
<div class="t" id="m129" style="top:443.7px;font:400 12.5px/20px 'DejaVu Sans', sans-serif;color:#000;letter-spacing:-0.090px;left:1036px;">Auto Generated KeyList from Product Profile...</div>
<div class="t" id="m130" style="top:463.7px;font:400 12.5px/20px 'DejaVu Sans', sans-serif;color:#000;left:712.3px;">22</div>
<div class="t" id="m131" style="top:463.7px;font:400 12.5px/20px 'DejaVu Sans', sans-serif;color:#000;left:786px;">PP_Size Test</div>
<div class="t" id="m132" style="top:463.7px;font:400 12.5px/20px 'DejaVu Sans', sans-serif;color:#000;letter-spacing:-0.090px;left:1036px;">Auto Generated KeyList from Product Profile...</div>
<div class="t" id="m133" style="top:510px;font:400 12.5px/20px 'Liberation Sans', sans-serif;color:#000;letter-spacing:0.215px;left:1192.5px;">Count: 18 of 18</div>
<div class="r" style="left:704px;top:37px;width:638px;height:493px;border:3px solid #6667cc;filter:drop-shadow(1px 2px 3px rgba(0,0,0,.6));"></div>
<div class="r" style="left:48px;top:79px;width:111px;height:33px;border:3px solid #6667cc;filter:drop-shadow(2px 3px 2.5px rgba(0,0,0,.38));"></div>
<div class="r" style="left:-3px;top:135px;width:162px;height:33px;border:3px solid #6667cc;filter:drop-shadow(2px 3px 2.5px rgba(0,0,0,.38));"></div>
<div class="r" style="left:209px;top:266px;width:223px;height:38.5px;border:3px solid #6667cc;filter:drop-shadow(2px 3px 2.5px rgba(0,0,0,.38));"></div>
<div class="r" style="left:1017px;top:74px;width:142px;height:56px;border:3px solid #6667cc;filter:drop-shadow(2px 3px 2.5px rgba(0,0,0,.38));"></div>
<div class="r" style="left:981px;top:562px;width:113px;height:81px;border:3px solid #6667cc;filter:drop-shadow(2px 3px 2.5px rgba(0,0,0,.38));"></div>
<svg class="r" style="left:0px;top:0px" width="260" height="200" viewBox="0 0 260 200"><path d="M159.6,153.1 C162.2,152.4 170.5,151.1 175.2,149.1 C179.9,147.1 184.5,144.4 187.8,141.0 C191.1,137.6 193.3,132.7 194.8,128.5 C196.3,124.3 196.5,120.5 196.6,115.9 C196.7,111.3 196.4,106.7 195.3,100.8 C194.2,94.9 192.4,86.9 190.3,80.6 C188.2,74.3 185.0,68.5 182.7,63.0 C180.4,57.5 177.9,52.5 176.4,47.9 C174.9,43.3 174.2,39.1 173.9,35.3 C173.6,31.5 173.8,28.3 174.7,25.2 C175.5,22.1 176.8,18.8 179.0,16.4 C181.2,14.0 184.7,11.8 187.8,10.6 C190.9,9.4 195.9,9.3 197.5,9.0" fill="none" stroke="#6667cc" stroke-width="3" filter="url(#ds)"/><path d="M195.2,5.2 L204.3,8.7 L197,14.2 Z" fill="#6667cc"/><defs><filter id="ds" x="-20%" y="-20%" width="150%" height="150%"><feDropShadow dx="1.5" dy="2" stdDeviation="1.5" flood-color="#000" flood-opacity=".3"/></filter></defs></svg>
<div class="r" style="left:1051.8px;top:592.9px;width:41.0px;height:41.0px;background:#6667cc;border-radius:20.5px;box-shadow:1px 5px 6px rgba(0,0,0,.45);"></div>
<div class="r" style="left:368.0px;top:264.90000000000003px;width:40.8px;height:40.8px;background:#6667cc;border-radius:20.4px;box-shadow:1px 5px 6px rgba(0,0,0,.45);"></div>
<div class="r" style="left:980.0px;top:353.0px;width:41.0px;height:41.0px;background:#6667cc;border-radius:20.5px;box-shadow:1px 5px 6px rgba(0,0,0,.45);"></div>
<div class="r" style="left:1119.0px;top:73.7px;width:41.0px;height:41.0px;background:#6667cc;border-radius:20.5px;box-shadow:1px 5px 6px rgba(0,0,0,.45);"></div>
<div class="t" style="top:603.1px;font:400 30.5px/20px 'Liberation Sans', sans-serif;color:#fff;left:773.3px;width:600px;text-align:center;-webkit-text-stroke:0.7px #fff;clip-path:polygon(280px -12px,320px -12px,320px 16.5px,303.7px 16.5px,303.7px 26px,298.1px 26px,298.1px 16.5px,280px 16.5px);"><span id="m134">1</span></div>
<div class="t" style="top:275.0px;font:400 30.5px/20px 'Liberation Sans', sans-serif;color:#fff;left:88.39999999999998px;width:600px;text-align:center;-webkit-text-stroke:0.7px #fff;"><span id="m135">2</span></div>
<div class="t" style="top:363.2px;font:400 30.5px/20px 'Liberation Sans', sans-serif;color:#fff;left:700.5px;width:600px;text-align:center;-webkit-text-stroke:0.7px #fff;"><span id="m136">3</span></div>
<div class="t" style="top:83.9px;font:400 30.5px/20px 'Liberation Sans', sans-serif;color:#fff;left:839.5px;width:600px;text-align:center;-webkit-text-stroke:0.7px #fff;"><span id="m137">4</span></div>
<div class="r" style="left:2px;top:652px;width:1372px;height:1px;background:#f3f3ea;"></div>
<div class="r" style="left:1373px;top:2px;width:1px;height:651px;background:#f3f3ea;"></div>
<div class="r" style="left:0px;top:0px;width:1376px;height:655px;border:2px solid #6667cc;"></div>
</div></body></html>
